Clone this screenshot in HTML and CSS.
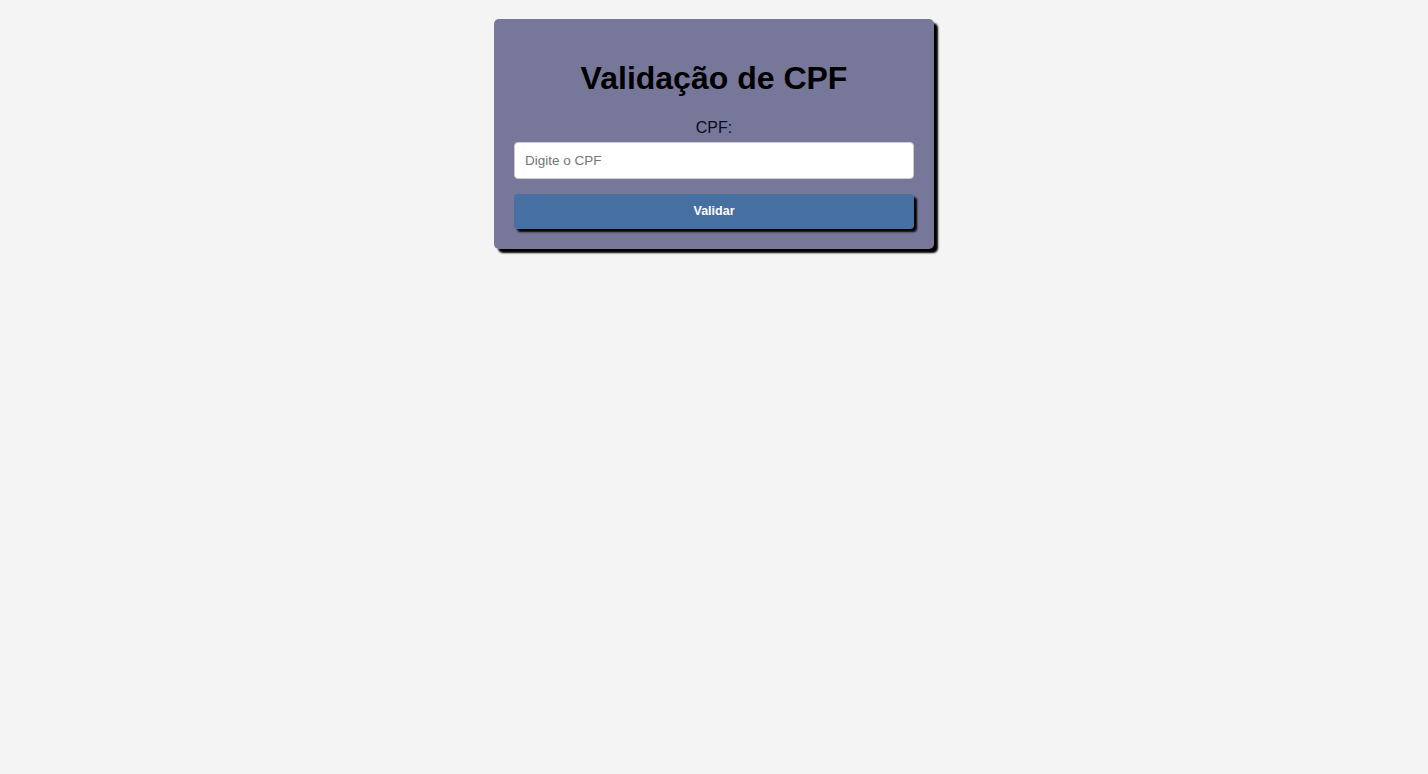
FILE: index.html
```html
<!DOCTYPE html>
<html lang="pt-BR">
<head>
<meta charset="utf-8">
<title>Validação de CPF</title>
<link rel="stylesheet" href="styles.css">
</head>
<body>
<div class="card">
  <h1 class="title">Validação de CPF</h1>
  <label class="label" for="cpf">CPF:</label>
  <input class="input" id="cpf" type="text" placeholder="Digite o CPF">
  <button class="btn" type="button">Validar</button>
</div>
</body>
</html>
```
FILE: styles.css
```css
html, body {
  margin: 0;
  padding: 0;
}
html {
  background: #f4f4f4;
}
body {
  box-sizing: border-box;
  min-height: 100vh;
  background: #f4f4f4;
  font-family: "Liberation Sans", Arial, sans-serif;
  padding: 19px 0 20px;
}
.card {
  width: 400px;
  margin: 0 auto;
  padding: 20px;
  background: #777799;
  border-radius: 5px;
  box-shadow: 4px 4px 2px #000;
  display: flex;
  flex-direction: column;
  align-items: stretch;
}
.title {
  font-size: 32px;
  font-weight: bold;
  text-align: center;
  margin: 21px 0 22px;
  line-height: 37px;
  color: #000;
}
.label {
  font-size: 16px;
  line-height: 18px;
  text-align: center;
  color: #0a0a1e;
  margin-bottom: 5px;
}
.input {
  box-sizing: border-box;
  height: 37px;
  padding: 0 10px;
  border: 1px solid #ccc;
  border-radius: 4px;
  font-family: "Liberation Sans", Arial, sans-serif;
  font-size: 13.5px;
  background: #fff;
  outline: none;
}
.input::placeholder {
  color: #757575;
}
.btn {
  margin-top: 15px;
  height: 35px;
  padding: 0 0 1px;
  border: none;
  border-radius: 4px;
  background: #4670a2;
  color: #fff;
  font-family: "Liberation Sans", Arial, sans-serif;
  font-size: 12.5px;
  font-weight: bold;
  box-shadow: 3px 3px 2px #000;
  cursor: pointer;
}
```
